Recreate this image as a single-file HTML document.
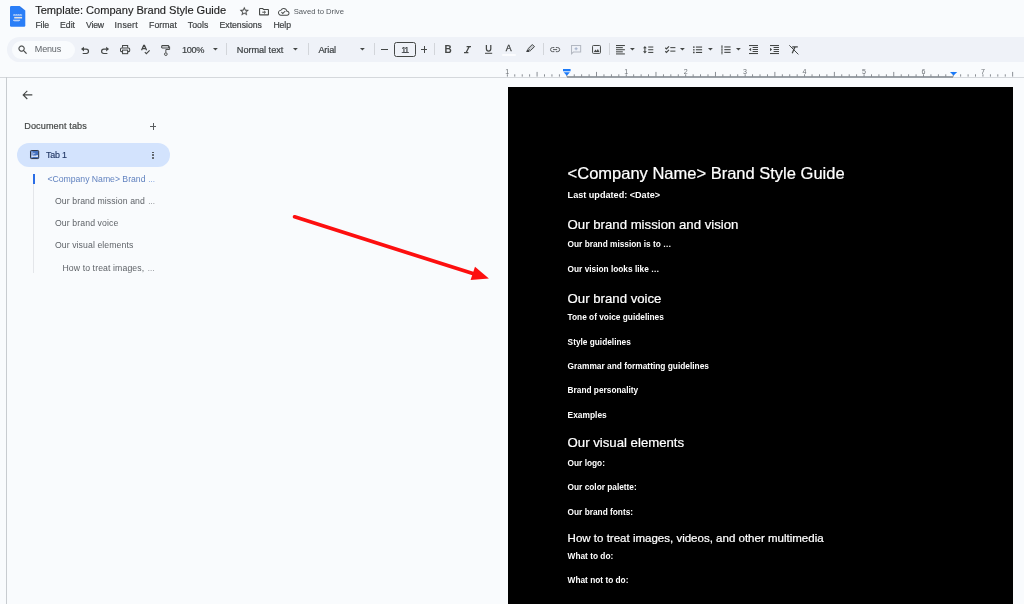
<!DOCTYPE html>
<html><head><meta charset="utf-8"><title>Template: Company Brand Style Guide</title>
<style>
html,body{margin:0;padding:0}
body{width:1024px;height:604px;overflow:hidden;background:#f9fbfd;position:relative;font-family:"Liberation Sans",sans-serif}
.t{position:absolute;white-space:nowrap}
#w{position:absolute;left:0;top:0;width:1044px;height:624px;overflow:hidden;will-change:transform;filter:blur(0.4px)}
.a{position:absolute}
svg{position:absolute;overflow:visible}
</style></head><body><div id="w">

<svg style="left:9.9px;top:6.3px" width="15.3" height="20.7" viewBox="0 0 15.300 20.700" ><path d="M1.200 0H9.700L15.300 4.500V19.500Q15.300 20.700 14.100 20.700H1.200Q0 20.700 0 19.500V1.200Q0 0 1.200 0Z" fill="#2a7ef7"/>
<path d="M10.800 1.900L12.600 3.500" stroke="#3a6fc4" stroke-width="0.800"/>
<rect x="3.100" y="8.600" width="9" height="0.900" fill="#e9f1fe"/><path d="M3.600 8.700L4.300 7.900L5 8.700M5.700 8.700L6.400 7.900L7.100 8.700M7.800 8.700L8.500 7.900L9.200 8.700M9.900 8.700L10.600 7.900L11.300 8.700" fill="#e9f1fe" opacity="0.800"/>
<rect x="4.200" y="10.900" width="7.900" height="1.600" fill="#e6e2df"/><rect x="3.100" y="13.800" width="7" height="0.900" fill="#e9f1fe"/><rect x="4.200" y="14.700" width="4.800" height="0.600" fill="#cfd9ee"/></svg>
<div class="t" style="left:35.2px;top:5px;font-size:11.1px;line-height:11.1px;color:#1f1f1f;letter-spacing:-0.025px;-webkit-text-stroke:0.150px #1f1f1f;">Template: Company Brand Style Guide</div>
<div class="t" style="left:35.4px;top:21px;font-size:8.7px;line-height:8.7px;color:#3c3f41;letter-spacing:-0.105px;-webkit-text-stroke:0.200px #3c3f41;">File</div>
<div class="t" style="left:60px;top:21px;font-size:8.7px;line-height:8.7px;color:#3c3f41;letter-spacing:0.002px;-webkit-text-stroke:0.200px #3c3f41;">Edit</div>
<div class="t" style="left:86px;top:21px;font-size:8.7px;line-height:8.7px;color:#3c3f41;letter-spacing:-0.175px;-webkit-text-stroke:0.200px #3c3f41;">View</div>
<div class="t" style="left:114.6px;top:21px;font-size:8.7px;line-height:8.7px;color:#3c3f41;letter-spacing:0.274px;-webkit-text-stroke:0.200px #3c3f41;">Insert</div>
<div class="t" style="left:149px;top:21px;font-size:8.7px;line-height:8.7px;color:#3c3f41;letter-spacing:0.074px;-webkit-text-stroke:0.200px #3c3f41;">Format</div>
<div class="t" style="left:187.8px;top:21px;font-size:8.7px;line-height:8.7px;color:#3c3f41;letter-spacing:0.038px;-webkit-text-stroke:0.200px #3c3f41;">Tools</div>
<div class="t" style="left:219.5px;top:21px;font-size:8.7px;line-height:8.7px;color:#3c3f41;letter-spacing:-0.006px;-webkit-text-stroke:0.200px #3c3f41;">Extensions</div>
<div class="t" style="left:273.4px;top:21px;font-size:8.7px;line-height:8.7px;color:#3c3f41;letter-spacing:-0.073px;-webkit-text-stroke:0.200px #3c3f41;">Help</div>
<div class="t" style="left:293.7px;top:8px;font-size:7.7px;line-height:7.7px;color:#54595e;letter-spacing:-0.014px;">Saved to Drive</div>
<svg style="left:238.7px;top:5.5px" width="10.6" height="10.6" viewBox="0 0 24 24" ><path stroke="#444746" stroke-width="0.5" d="M22 9.24l-7.19-.62L12 2 9.19 8.63 2 9.24l5.46 4.73L5.82 21 12 17.27 18.18 21l-1.63-7.03L22 9.240zM12 15.400l-3.760 2.270 1-4.280-3.320-2.880 4.380-.380L12 6.100l1.710 4.040 4.380.380-3.320 2.880 1 4.280L12 15.400z" fill="#444746"/></svg>
<svg style="left:258.7px;top:7.7px" width="10" height="7.4" viewBox="0 0 20 15" ><path d="M1.8 1H7.2L9.2 3H18.2Q19 3 19 3.800V13.200Q19 14 18.200 14H1.800Q1 14 1 13.200V1.800Q1 1 1.800 1Z" fill="none" stroke="#444746" stroke-width="2.200"/><path d="M6.500 8.500H12.500M10.200 5.800L13 8.500L10.200 11.200" fill="none" stroke="#444746" stroke-width="2"/></svg>
<svg style="left:277.7px;top:6.8px" width="11.5" height="9.6" viewBox="0 0 24 20" ><path d="M19.350 8.040C18.670 4.590 15.640 2 12 2 9.110 2 6.600 3.640 5.350 6.040 2.340 6.360 0 8.910 0 12c0 3.310 2.690 6 6 6h13c2.760 0 5-2.240 5-5 0-2.640-2.050-4.780-4.650-4.960zM19 16H6c-2.210 0-4-1.790-4-4 0-2.050 1.530-3.760 3.560-3.970l1.070-.11.500-.95C8.080 5.140 9.940 4 12 4c2.620 0 4.880 1.860 5.390 4.430l.3 1.500 1.530.11c1.560.1 2.780 1.410 2.780 2.960 0 1.650-1.350 3-3 3zm-9-3.820l-2.090-2.090L6.500 11.500 10 15l6.010-6.010-1.410-1.410z" fill="#444746"/></svg>
<div class="a" style="left:7px;top:36.900px;width:1050px;height:24.700px;border-radius:12.350px;background:#eff2f8"></div>
<div class="a" style="left:11.900px;top:41.100px;width:62.700px;height:17.800px;border-radius:9px;background:#f9fbfd"></div>
<svg style="left:17.1px;top:43.7px" width="11.6" height="11.6" viewBox="0 0 24 24" ><path d="M15.500 14h-.79l-.28-.27C15.410 12.590 16 11.110 16 9.500 16 5.910 13.090 3 9.500 3S3 5.910 3 9.500 5.910 16 9.500 16c1.610 0 3.090-.59 4.230-1.570l.27.28v.79l5 4.990L20.490 19l-4.990-5zm-6 0C7.010 14 5 11.990 5 9.500S7.010 5 9.500 5 14 7.010 14 9.500 11.990 14 9.500 14z" fill="#444746" stroke="#444746" stroke-width="0.3"/></svg>
<div class="t" style="left:34.8px;top:45px;font-size:9px;line-height:9px;color:#5f6368;letter-spacing:-0.163px;">Menus</div>
<svg style="left:81.3px;top:46.8px" width="8.1" height="7" viewBox="0 0 8.100 7" ><path d="M2.800 2.100H5.300Q7.500 2.100 7.500 4.300Q7.500 6.500 5.300 6.500H1.700" fill="none" stroke="#444746" stroke-width="1.2"/><path d="M0 2.100L3 -0.200V4.400Z" fill="#444746"/></svg>
<svg style="left:100.7px;top:46.8px" width="8.1" height="7" viewBox="0 0 8.100 7" ><g transform="translate(8.100,0) scale(-1,1)"><path d="M2.800 2.100H5.300Q7.500 2.100 7.500 4.300Q7.500 6.500 5.300 6.500H1.700" fill="none" stroke="#444746" stroke-width="1.2"/><path d="M0 2.100L3 -0.200V4.400Z" fill="#444746"/></g></svg>
<svg style="left:120px;top:45px" width="10.2" height="9.2" viewBox="0 0 20 18" ><path d="M5 5.500V1H15V5.500" fill="none" stroke="#444746" stroke-width="2"/><path d="M4.500 13H2.500Q1 13 1 11.500V8Q1 5.700 3.300 5.700H16.700Q19 5.700 19 8V11.500Q19 13 17.500 13H15.500" fill="none" stroke="#444746" stroke-width="2"/><rect x="5" y="10" width="10" height="7" fill="none" stroke="#444746" stroke-width="2"/></svg>
<svg style="left:141.2px;top:44.8px" width="9.2" height="9.6" viewBox="0 0 18 19" ><path d="M1 10.500L5.200 0.800H6.800L11 10.500M2.800 7.200H9.200" fill="none" stroke="#444746" stroke-width="2.4"/><path d="M7.500 14.300L10.500 17.300L17 10.800" fill="none" stroke="#444746" stroke-width="2.2"/></svg>
<svg style="left:161px;top:44.7px" width="9.2" height="11" viewBox="0 0 18 22" ><rect x="1.200" y="1.200" width="14" height="4.600" rx="1" fill="none" stroke="#444746" stroke-width="2.100"/><path d="M15.200 3.500H17V9H9.500V15" fill="none" stroke="#444746" stroke-width="1.900"/><circle cx="9.500" cy="18.300" r="2.700" fill="none" stroke="#444746" stroke-width="1.900"/></svg>
<div class="t" style="left:182.1px;top:46px;font-size:9.2px;line-height:9.2px;color:#3c4043;letter-spacing:-0.358px;-webkit-text-stroke:0.200px #3c4043;">100%</div>
<div class="t" style="left:236.8px;top:46px;font-size:9.2px;line-height:9.2px;color:#3c4043;letter-spacing:-0.048px;-webkit-text-stroke:0.200px #3c4043;">Normal text</div>
<div class="t" style="left:318.4px;top:46px;font-size:9.2px;line-height:9.2px;color:#3c4043;letter-spacing:-0.161px;-webkit-text-stroke:0.200px #3c4043;">Arial</div>
<div class="a" style="left:226.1px;top:43.200px;width:1px;height:11.600px;background:#d2d5da"></div>
<div class="a" style="left:308.0px;top:43.200px;width:1px;height:11.600px;background:#d2d5da"></div>
<div class="a" style="left:374.1px;top:43.200px;width:1px;height:11.600px;background:#d2d5da"></div>
<div class="a" style="left:434.1px;top:43.200px;width:1px;height:11.600px;background:#d2d5da"></div>
<div class="a" style="left:542.5px;top:43.200px;width:1px;height:11.600px;background:#d2d5da"></div>
<div class="a" style="left:609.0px;top:43.200px;width:1px;height:11.600px;background:#d2d5da"></div>
<svg style="left:212.9px;top:48.2px" width="4.8" height="2.5" viewBox="0 0 4.800 2.500" ><path d="M0 0H4.800L2.400 2.500Z" fill="#444746"/></svg>
<svg style="left:293.0px;top:48.2px" width="4.8" height="2.5" viewBox="0 0 4.800 2.500" ><path d="M0 0H4.800L2.400 2.500Z" fill="#444746"/></svg>
<svg style="left:360.0px;top:48.2px" width="4.8" height="2.5" viewBox="0 0 4.800 2.500" ><path d="M0 0H4.800L2.400 2.500Z" fill="#444746"/></svg>
<svg style="left:629.8000000000001px;top:48.2px" width="4.8" height="2.5" viewBox="0 0 4.800 2.500" ><path d="M0 0H4.800L2.400 2.500Z" fill="#444746"/></svg>
<svg style="left:680.3000000000001px;top:48.2px" width="4.8" height="2.5" viewBox="0 0 4.800 2.500" ><path d="M0 0H4.800L2.400 2.500Z" fill="#444746"/></svg>
<svg style="left:708.3000000000001px;top:48.2px" width="4.8" height="2.5" viewBox="0 0 4.800 2.500" ><path d="M0 0H4.800L2.400 2.500Z" fill="#444746"/></svg>
<svg style="left:736.4px;top:48.2px" width="4.8" height="2.5" viewBox="0 0 4.800 2.500" ><path d="M0 0H4.800L2.400 2.500Z" fill="#444746"/></svg>
<div class="a" style="left:394.2px;top:42.1px;width:19.9px;height:13px;border:0.8px solid #444746;border-radius:2.5px"></div>
<div class="t" style="left:401.3px;top:46px;font-size:9px;line-height:9px;color:#3c4043;letter-spacing:-1.321px;-webkit-text-stroke:0.200px #3c4043;">11</div>
<div class="a" style="left:381px;top:49px;width:6.700px;height:1px;background:#444746"></div>
<div class="a" style="left:420.600px;top:49px;width:6.800px;height:1px;background:#444746"></div>
<div class="a" style="left:423.500px;top:46.100px;width:1px;height:6.800px;background:#444746"></div>
<div class="t" style="left:444.5px;top:45px;font-size:10px;line-height:10px;color:#444746;font-weight:bold;letter-spacing:-1.022px;">B</div>
<svg style="left:463.8px;top:46px" width="7" height="7.3" viewBox="0 0 7 7.3" ><path d="M2.600 0.600H7M0 6.700H4.400M5.200 0.600L2 6.700" fill="none" stroke="#444746" stroke-width="1.250"/></svg>
<svg style="left:484.6px;top:45px" width="7.2" height="9" viewBox="0 0 7.2 9" ><path d="M1.400 0V3.800Q1.400 6.100 3.600 6.100Q5.800 6.100 5.800 3.800V0" fill="none" stroke="#444746" stroke-width="1.250"/><rect x="0" y="7.800" width="7.200" height="1" fill="#444746"/></svg>
<div class="t" style="left:505.7px;top:44px;font-size:8.8px;line-height:8.8px;color:#3c3f41;letter-spacing:0.330px;-webkit-text-stroke:0.350px #444746;">A</div>
<div class="a" style="left:502.3px;top:53.6px;width:13.6px;height:2.6px;border-radius:1.3px;background:#fbfcfe"></div>
<svg style="left:526.3px;top:44px" width="9" height="8.4" viewBox="0 0 9 8.400" ><path d="M6.300 0.500L8.500 2.700L4.300 6.700L2.200 4.600Z" fill="#c9ccd2" stroke="#444746" stroke-width="1"/><path d="M1.700 5.100L3.800 7.200L2.800 8.100H0.300V7.300Z" fill="#3c3f41"/></svg>
<svg style="left:550px;top:47.3px" width="10.2" height="5.2" viewBox="0 0 20 10" ><path d="M8.500 1H5Q1 1 1 5Q1 9 5 9H8.500M11.500 1H15Q19 1 19 5Q19 9 15 9H11.500M6 5H14" fill="none" stroke="#55585b" stroke-width="1.900"/></svg>
<svg style="left:570.9px;top:44.8px" width="10.2" height="9.4" viewBox="0 0 20 18.500" ><path d="M1 1H19V14H4.500L1 17.500Z" fill="none" stroke="#b3b8c1" stroke-width="2"/><path d="M10 4.500V10.500M7 7.500H13" stroke="#a4b1ca" stroke-width="2.100"/></svg>
<svg style="left:591.9px;top:45px" width="9" height="8.9" viewBox="0 0 18 18" ><rect x="1" y="1" width="16" height="16" rx="1.800" fill="none" stroke="#444746" stroke-width="2"/><path d="M3.500 14L7 9.300L9.200 12L11.800 8.300L15 14Z" fill="#444746"/></svg>
<svg style="left:616.1px;top:45.1px" width="8.9" height="9.5" viewBox="0 0 8.900 9.500" ><rect x="0" y="0" width="8.9" height="1.050" fill="#444746"/><rect x="0" y="2.1" width="6.8" height="1.050" fill="#444746"/><rect x="0" y="4.2" width="8.9" height="1.050" fill="#444746"/><rect x="0" y="6.3" width="6.8" height="1.050" fill="#444746"/><rect x="0" y="8.4" width="8.9" height="1.050" fill="#444746"/></svg>
<svg style="left:642.8px;top:46px" width="10.3" height="7.5" viewBox="0 0 10.300 7.500" ><path d="M1.900 1.400V6.100" stroke="#444746" stroke-width="1.100"/><path d="M0 2.300L1.900 0L3.800 2.300ZM0 5.200L1.900 7.500L3.800 5.200Z" fill="#444746"/><rect x="5.200" y="0.500" width="5.100" height="1.050" fill="#444746"/><rect x="5.200" y="3.200" width="5.100" height="1.050" fill="#444746"/><rect x="5.200" y="5.900" width="5.100" height="1.050" fill="#444746"/></svg>
<svg style="left:664.6px;top:46.2px" width="10.4" height="6.8" viewBox="0 0 10.400 6.800" ><path d="M0.300 1.700L1.500 2.900L4 0.400M0.300 5.200L1.500 6.400L4 3.900" fill="none" stroke="#444746" stroke-width="1.250"/><rect x="5.300" y="1.100" width="5.100" height="1.050" fill="#444746"/><rect x="5.300" y="4.600" width="5.100" height="1.050" fill="#444746"/></svg>
<svg style="left:693.1px;top:45.9px" width="9.1" height="7.5" viewBox="0 0 9.100 7.500" ><circle cx="0.850" cy="1.05" r="0.850" fill="#444746"/><rect x="2.900" y="0.5" width="6.200" height="1.100" fill="#444746"/><circle cx="0.850" cy="3.75" r="0.850" fill="#444746"/><rect x="2.900" y="3.2" width="6.200" height="1.100" fill="#444746"/><circle cx="0.850" cy="6.45" r="0.850" fill="#444746"/><rect x="2.900" y="5.9" width="6.200" height="1.100" fill="#444746"/></svg>
<svg style="left:720.9px;top:45px" width="9.6" height="9.5" viewBox="0 0 9.600 9.500" ><rect x="0.300" y="0" width="1.300" height="9.500" fill="#444746" opacity="0.550"/><rect x="0.300" y="1" width="1.300" height="1.800" fill="#444746" opacity="0.500"/><rect x="0.300" y="3.800" width="1.300" height="1.800" fill="#444746" opacity="0.500"/><rect x="0.300" y="6.600" width="1.300" height="1.800" fill="#444746" opacity="0.500"/><rect x="3.300" y="1.4" width="6.300" height="1.100" fill="#444746"/><rect x="3.300" y="4.1" width="6.300" height="1.100" fill="#444746"/><rect x="3.300" y="6.8" width="6.300" height="1.100" fill="#444746"/></svg>
<svg style="left:749px;top:45px" width="9" height="9.05" viewBox="0 0 9 9.050" ><rect x="0" y="0" width="9" height="1.050" fill="#444746"/><rect x="0" y="8" width="9" height="1.050" fill="#444746"/><rect x="3.600" y="2" width="5.400" height="1" fill="#444746"/><rect x="3.600" y="4" width="5.400" height="1" fill="#444746"/><rect x="3.600" y="6" width="5.400" height="1" fill="#444746"/><path d="M0 4.500L2.100 2.700V6.300Z" fill="#444746"/></svg>
<svg style="left:769.5px;top:45px" width="9" height="9.05" viewBox="0 0 9 9.050" ><rect x="0" y="0" width="9" height="1.050" fill="#444746"/><rect x="0" y="8" width="9" height="1.050" fill="#444746"/><rect x="3.600" y="2" width="5.400" height="1" fill="#444746"/><rect x="3.600" y="4" width="5.400" height="1" fill="#444746"/><rect x="3.600" y="6" width="5.400" height="1" fill="#444746"/><path d="M2.100 4.500L0 2.700V6.300Z" fill="#444746"/></svg>
<svg style="left:788.8px;top:45px" width="9.7" height="9.6" viewBox="0 0 9.700 9.600" ><path d="M3.200 1.800H8.800M6 1.900L3.200 8.200" fill="none" stroke="#444746" stroke-width="1.300"/><path d="M0.300 0.300L9.400 9.400" stroke="#444746" stroke-width="1"/></svg>
<div class="a" style="left:0;top:76.600px;width:1044px;height:1px;background:#d5d8dc"></div>
<div class="a" style="left:566.800px;top:76.300px;width:386.300px;height:1.400px;background:#9aa0a6"></div>
<svg style="left:0px;top:0px" width="1024" height="80" viewBox="0 0 1024 80" fill="#7d8288"><rect x="506.90" y="74.30" width="0.900" height="2.3"/><rect x="514.33" y="74.30" width="0.900" height="2.3"/><rect x="521.76" y="74.30" width="0.900" height="2.3"/><rect x="529.19" y="74.30" width="0.900" height="2.3"/><rect x="536.62" y="71.90" width="0.900" height="4.7"/><rect x="544.06" y="74.30" width="0.900" height="2.3"/><rect x="551.49" y="74.30" width="0.900" height="2.3"/><rect x="558.92" y="74.30" width="0.900" height="2.3"/><rect x="566.35" y="74.30" width="0.900" height="2.3"/><rect x="573.78" y="74.30" width="0.900" height="2.3"/><rect x="581.21" y="74.30" width="0.900" height="2.3"/><rect x="588.64" y="74.30" width="0.900" height="2.3"/><rect x="596.07" y="71.90" width="0.900" height="4.7"/><rect x="603.51" y="74.30" width="0.900" height="2.3"/><rect x="610.94" y="74.30" width="0.900" height="2.3"/><rect x="618.37" y="74.30" width="0.900" height="2.3"/><rect x="625.80" y="74.30" width="0.900" height="2.3"/><rect x="633.23" y="74.30" width="0.900" height="2.3"/><rect x="640.66" y="74.30" width="0.900" height="2.3"/><rect x="648.09" y="74.30" width="0.900" height="2.3"/><rect x="655.52" y="71.90" width="0.900" height="4.7"/><rect x="662.96" y="74.30" width="0.900" height="2.3"/><rect x="670.39" y="74.30" width="0.900" height="2.3"/><rect x="677.82" y="74.30" width="0.900" height="2.3"/><rect x="685.25" y="74.30" width="0.900" height="2.3"/><rect x="692.68" y="74.30" width="0.900" height="2.3"/><rect x="700.11" y="74.30" width="0.900" height="2.3"/><rect x="707.54" y="74.30" width="0.900" height="2.3"/><rect x="714.97" y="71.90" width="0.900" height="4.7"/><rect x="722.41" y="74.30" width="0.900" height="2.3"/><rect x="729.84" y="74.30" width="0.900" height="2.3"/><rect x="737.27" y="74.30" width="0.900" height="2.3"/><rect x="744.70" y="74.30" width="0.900" height="2.3"/><rect x="752.13" y="74.30" width="0.900" height="2.3"/><rect x="759.56" y="74.30" width="0.900" height="2.3"/><rect x="766.99" y="74.30" width="0.900" height="2.3"/><rect x="774.42" y="71.90" width="0.900" height="4.7"/><rect x="781.86" y="74.30" width="0.900" height="2.3"/><rect x="789.29" y="74.30" width="0.900" height="2.3"/><rect x="796.72" y="74.30" width="0.900" height="2.3"/><rect x="804.15" y="74.30" width="0.900" height="2.3"/><rect x="811.58" y="74.30" width="0.900" height="2.3"/><rect x="819.01" y="74.30" width="0.900" height="2.3"/><rect x="826.44" y="74.30" width="0.900" height="2.3"/><rect x="833.88" y="71.90" width="0.900" height="4.7"/><rect x="841.31" y="74.30" width="0.900" height="2.3"/><rect x="848.74" y="74.30" width="0.900" height="2.3"/><rect x="856.17" y="74.30" width="0.900" height="2.3"/><rect x="863.60" y="74.30" width="0.900" height="2.3"/><rect x="871.03" y="74.30" width="0.900" height="2.3"/><rect x="878.46" y="74.30" width="0.900" height="2.3"/><rect x="885.89" y="74.30" width="0.900" height="2.3"/><rect x="893.32" y="71.90" width="0.900" height="4.7"/><rect x="900.76" y="74.30" width="0.900" height="2.3"/><rect x="908.19" y="74.30" width="0.900" height="2.3"/><rect x="915.62" y="74.30" width="0.900" height="2.3"/><rect x="923.05" y="74.30" width="0.900" height="2.3"/><rect x="930.48" y="74.30" width="0.900" height="2.3"/><rect x="937.91" y="74.30" width="0.900" height="2.3"/><rect x="945.34" y="74.30" width="0.900" height="2.3"/><rect x="952.77" y="71.90" width="0.900" height="4.7"/><rect x="960.21" y="74.30" width="0.900" height="2.3"/><rect x="967.64" y="74.30" width="0.900" height="2.3"/><rect x="975.07" y="74.30" width="0.900" height="2.3"/><rect x="982.50" y="74.30" width="0.900" height="2.3"/><rect x="989.93" y="74.30" width="0.900" height="2.3"/><rect x="997.36" y="74.30" width="0.900" height="2.3"/><rect x="1004.79" y="74.30" width="0.900" height="2.3"/><rect x="1012.22" y="71.90" width="0.900" height="4.7"/></svg>
<div class="t" style="left:502.3px;width:10px;text-align:center;top:67.700px;font-size:7.100px;line-height:8px;color:#6b7075">1</div>
<div class="t" style="left:621.2px;width:10px;text-align:center;top:67.700px;font-size:7.100px;line-height:8px;color:#6b7075">1</div>
<div class="t" style="left:680.7px;width:10px;text-align:center;top:67.700px;font-size:7.100px;line-height:8px;color:#6b7075">2</div>
<div class="t" style="left:740.1px;width:10px;text-align:center;top:67.700px;font-size:7.100px;line-height:8px;color:#6b7075">3</div>
<div class="t" style="left:799.6px;width:10px;text-align:center;top:67.700px;font-size:7.100px;line-height:8px;color:#6b7075">4</div>
<div class="t" style="left:859.0px;width:10px;text-align:center;top:67.700px;font-size:7.100px;line-height:8px;color:#6b7075">5</div>
<div class="t" style="left:918.5px;width:10px;text-align:center;top:67.700px;font-size:7.100px;line-height:8px;color:#6b7075">6</div>
<div class="t" style="left:978.0px;width:10px;text-align:center;top:67.700px;font-size:7.100px;line-height:8px;color:#6b7075">7</div>
<svg style="left:563px;top:68.6px" width="7.6" height="6.7" viewBox="0 0 7.600 6.700" ><rect x="0" y="0" width="7.600" height="2.300" fill="#1b7af8"/><path d="M0.700 3.200H6.900L3.800 6.700Z" fill="#1b7af8"/></svg>
<svg style="left:949.5px;top:71.8px" width="7.2" height="3.5" viewBox="0 0 7.200 3.500" ><path d="M0 0H7.200L3.600 3.500Z" fill="#1b7af8"/></svg>
<div class="a" style="left:6px;top:77px;width:1px;height:550px;background:#c8ccd0"></div>
<svg style="left:21.7px;top:89.9px" width="10.6" height="9.8" viewBox="0 0 20 18.500" ><path d="M19.500 9.250H2.500M10 1.500L2.200 9.250L10 17" fill="none" stroke="#444746" stroke-width="2.100"/></svg>
<div class="t" style="left:24.2px;top:122px;font-size:9.1px;line-height:9.1px;color:#444746;letter-spacing:0.123px;-webkit-text-stroke:0.200px #444746;">Document tabs</div>
<div class="a" style="left:149.900px;top:126.200px;width:6.600px;height:1px;background:#5a5d60"></div><div class="a" style="left:152.700px;top:123.400px;width:1px;height:6.600px;background:#5a5d60"></div>
<div class="a" style="left:16.800px;top:142.900px;width:153.300px;height:24px;border-radius:12px;background:#d3e3fd"></div>
<svg style="left:29.5px;top:150.2px" width="9.2" height="9.1" viewBox="0 0 9.200 9.100" ><rect x="0.500" y="0.500" width="8.200" height="8.100" rx="0.900" fill="#4472c0" stroke="#2e3543" stroke-width="1"/><rect x="1.500" y="1.500" width="1" height="6.100" fill="#c9d6f0"/><rect x="3.300" y="2.900" width="2" height="0.800" fill="#b5c6e8"/><rect x="3.300" y="2.900" width="0.800" height="1.800" fill="#b5c6e8"/><rect x="1.500" y="5.600" width="6.200" height="1.300" fill="#e3eaf8"/><rect x="6.600" y="5" width="1.100" height="1.900" fill="#f4f7fd"/></svg>
<div class="t" style="left:46px;top:151px;font-size:8.9px;line-height:8.9px;color:#223866;letter-spacing:-0.214px;-webkit-text-stroke:0.150px #223866;">Tab 1</div>
<div class="a" style="left:152.450px;top:151.55px;width:1.900px;height:1.900px;border-radius:0.950px;background:#444746"></div>
<div class="a" style="left:152.450px;top:154.45px;width:1.900px;height:1.900px;border-radius:0.950px;background:#444746"></div>
<div class="a" style="left:152.450px;top:157.35px;width:1.900px;height:1.900px;border-radius:0.950px;background:#444746"></div>
<div class="a" style="left:33px;top:174px;width:2px;height:9.800px;background:#2a6de6"></div>
<div class="a" style="left:33.100px;top:184px;width:1px;height:88.500px;background:#e4e6ea"></div>
<div class="t" style="left:47.4px;top:175px;font-size:8.7px;line-height:8.7px;color:#6283c0;letter-spacing:-0.023px;">&lt;Company Name&gt; Brand</div>
<div class="t" style="left:148.1px;top:176px;font-size:7.2px;line-height:7.2px;color:#4f7fd6;">…</div>
<div class="t" style="left:54.9px;top:197px;font-size:8.7px;line-height:8.7px;color:#5f6368;letter-spacing:0.104px;">Our brand mission and</div>
<div class="t" style="left:148.1px;top:198px;font-size:7.2px;line-height:7.2px;color:#5f6368;">…</div>
<div class="t" style="left:54.9px;top:219px;font-size:8.7px;line-height:8.7px;color:#5f6368;letter-spacing:0.120px;">Our brand voice</div>
<div class="t" style="left:54.9px;top:241px;font-size:8.7px;line-height:8.7px;color:#5f6368;letter-spacing:0.090px;">Our visual elements</div>
<div class="t" style="left:62.4px;top:264px;font-size:8.7px;line-height:8.7px;color:#5f6368;letter-spacing:0.111px;">How to treat images,</div>
<div class="t" style="left:147.5px;top:265px;font-size:7.2px;line-height:7.2px;color:#5f6368;">…</div>
<div class="a" style="left:507.800px;top:87.300px;width:505.600px;height:540px;background:#000"></div>
<div class="t" style="left:567.6px;top:165px;font-size:16.5px;line-height:16.5px;color:#fff;-webkit-text-stroke:0.220px #fff;">&lt;Company Name&gt; Brand Style Guide</div>
<div class="t" style="left:567.6px;top:191px;font-size:9.1px;line-height:9.1px;color:#fff;font-weight:bold;">Last updated: &lt;Date&gt;</div>
<div class="t" style="left:567.6px;top:218px;font-size:13.2px;line-height:13.2px;color:#fff;-webkit-text-stroke:0.220px #fff;">Our brand mission and vision</div>
<div class="t" style="left:567.6px;top:240px;font-size:8.3px;line-height:8.3px;color:#fff;font-weight:bold;">Our brand mission is to …</div>
<div class="t" style="left:567.6px;top:265px;font-size:8.3px;line-height:8.3px;color:#fff;font-weight:bold;">Our vision looks like …</div>
<div class="t" style="left:567.6px;top:292px;font-size:13.2px;line-height:13.2px;color:#fff;-webkit-text-stroke:0.220px #fff;">Our brand voice</div>
<div class="t" style="left:567.6px;top:313px;font-size:8.3px;line-height:8.3px;color:#fff;font-weight:bold;">Tone of voice guidelines</div>
<div class="t" style="left:567.6px;top:338px;font-size:8.3px;line-height:8.3px;color:#fff;font-weight:bold;">Style guidelines</div>
<div class="t" style="left:567.6px;top:362px;font-size:8.36px;line-height:8.36px;color:#fff;font-weight:bold;">Grammar and formatting guidelines</div>
<div class="t" style="left:567.6px;top:386px;font-size:8.3px;line-height:8.3px;color:#fff;font-weight:bold;">Brand personality</div>
<div class="t" style="left:567.6px;top:411px;font-size:8.4px;line-height:8.4px;color:#fff;font-weight:bold;">Examples</div>
<div class="t" style="left:567.6px;top:436px;font-size:13.2px;line-height:13.2px;color:#fff;-webkit-text-stroke:0.220px #fff;">Our visual elements</div>
<div class="t" style="left:567.6px;top:459px;font-size:8.3px;line-height:8.3px;color:#fff;font-weight:bold;">Our logo:</div>
<div class="t" style="left:567.6px;top:483px;font-size:8.3px;line-height:8.3px;color:#fff;font-weight:bold;">Our color palette:</div>
<div class="t" style="left:567.6px;top:508px;font-size:8.3px;line-height:8.3px;color:#fff;font-weight:bold;">Our brand fonts:</div>
<div class="t" style="left:567.6px;top:533px;font-size:11.53px;line-height:11.53px;color:#fff;-webkit-text-stroke:0.220px #fff;">How to treat images, videos, and other multimedia</div>
<div class="t" style="left:567.6px;top:552px;font-size:8.3px;line-height:8.3px;color:#fff;font-weight:bold;">What to do:</div>
<div class="t" style="left:567.6px;top:576px;font-size:8.3px;line-height:8.3px;color:#fff;font-weight:bold;">What not to do:</div>
<svg style="left:0px;top:0px" width="1024" height="604" viewBox="0 0 1024 604" ><line x1="294.600" y1="216.800" x2="476" y2="274.600" stroke="#fd0f0f" stroke-width="3.700" stroke-linecap="round"/><path d="M488.900 278.600L470.600 279.900L475 266.700Z" fill="#fd0f0f"/></svg>
</div></body></html>
